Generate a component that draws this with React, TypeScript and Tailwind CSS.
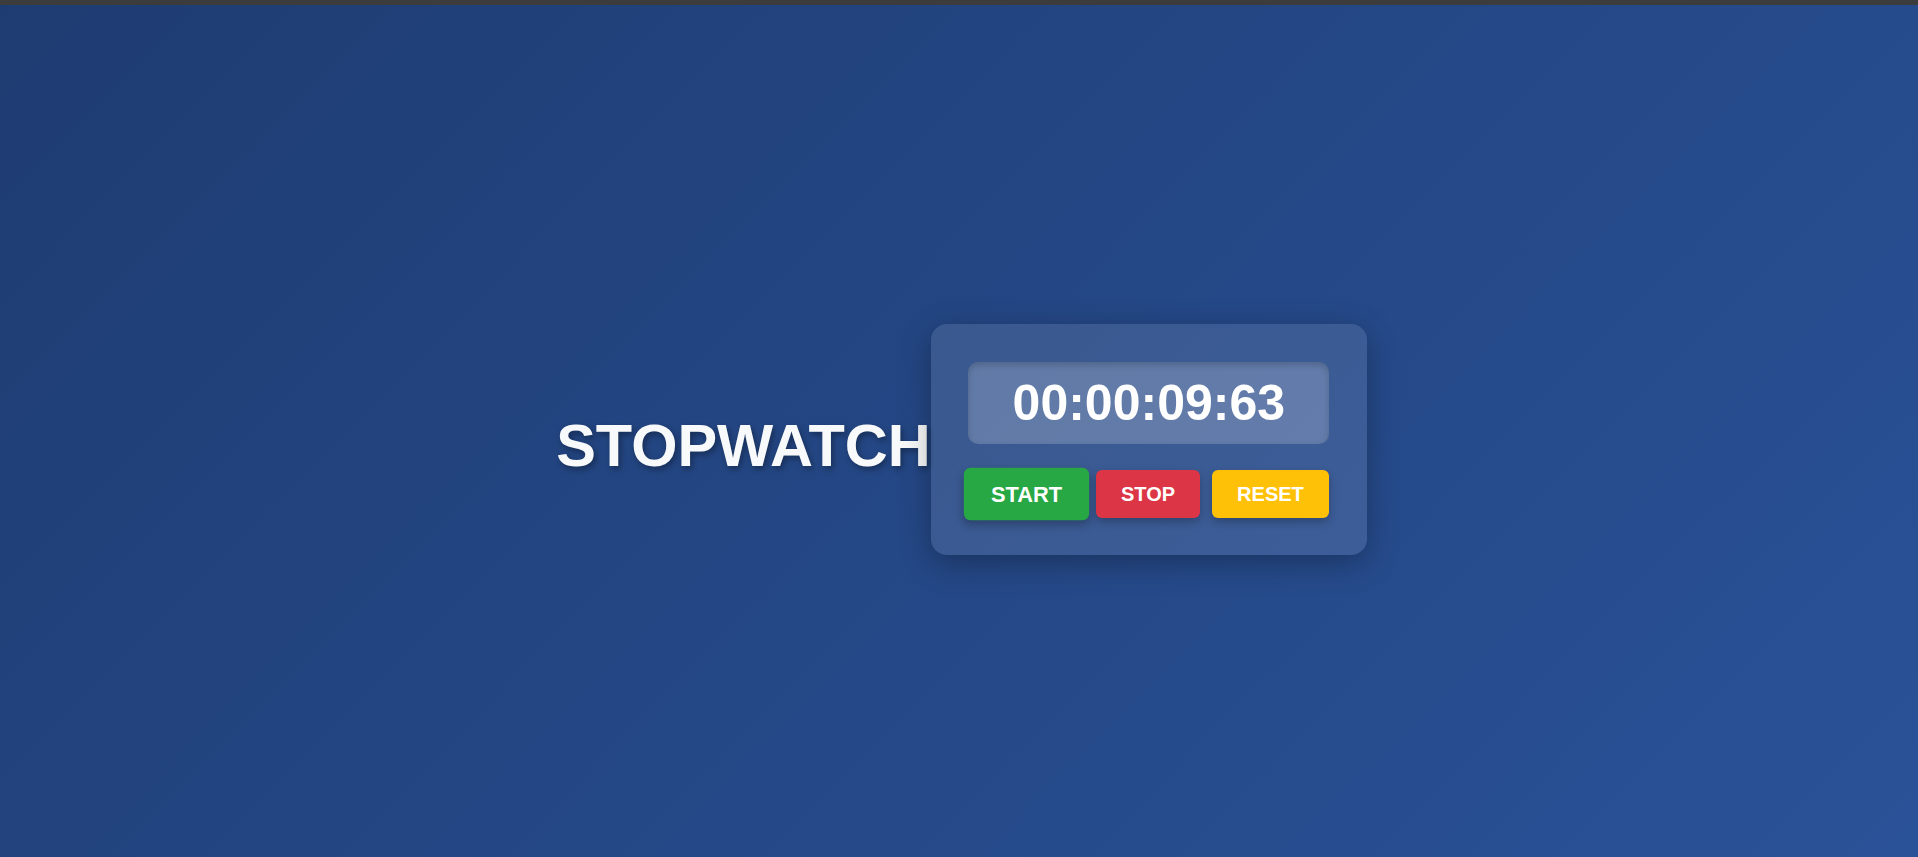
import React from "react";

export default function App() {
  return (
    <div
      className="w-full h-[857px] flex flex-col overflow-hidden bg-[linear-gradient(135deg,#1e3c72,#2a5298)]"
      style={{ fontFamily: '"Liberation Sans", Arial, sans-serif' }}
    >
      <div className="h-[5px] w-full bg-[#3c3c3c] shrink-0" />
      <main className="flex-1 flex items-center justify-center pt-[17px] pl-[5px]">
        <h1 className="pt-[13px] text-[59.5px] leading-[1.15] font-bold text-[#f8f9fa] [text-shadow:2px_3px_6px_rgba(0,0,0,0.35)]">
          STOPWATCH
        </h1>
        <div className="w-[436px] h-[231px] rounded-[16px] bg-white/10 shadow-[0_8px_32px_rgba(0,0,0,0.3)] px-[37px] pt-[38px] flex flex-col items-center">
          <div className="w-[361px] h-[82px] rounded-[10px] bg-white/20 shadow-[inset_0_3px_6px_rgba(0,0,0,0.18)] flex items-center justify-center">
            <span className="text-[50px] font-bold text-white leading-none">00:00:09:63</span>
          </div>
          <div className="mt-[26px] flex items-center justify-center gap-3">
            <button className="h-12 px-[25px] rounded-[6px] bg-[#28a745] text-white text-[20px] font-bold shadow-[0_4px_8px_rgba(0,0,0,0.25)] scale-[1.09]">
              START
            </button>
            <button className="h-12 px-[25px] rounded-[6px] bg-[#dc3545] text-white text-[20px] font-bold shadow-[0_4px_8px_rgba(0,0,0,0.25)]">
              STOP
            </button>
            <button className="h-12 px-[25px] rounded-[6px] bg-[#ffc107] text-white text-[20px] font-bold shadow-[0_4px_8px_rgba(0,0,0,0.25)]">
              RESET
            </button>
          </div>
        </div>
      </main>
    </div>
  );
}
